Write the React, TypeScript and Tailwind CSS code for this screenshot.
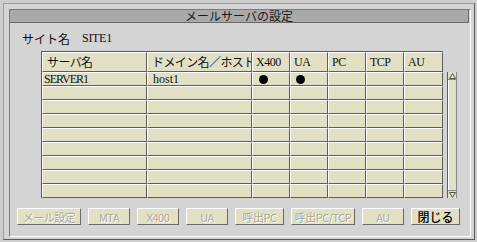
import React from "react";

const cols = [
  { w: "w-[105px]", label: "サーバ名", jp: true, pl: "pl-[4px]" },
  { w: "w-[105px]", label: "ドメイン名／ホスト", jp: true, pl: "pl-[4px]" },
  { w: "w-[38px]", label: "X400", jp: false, pl: "pl-[3px]" },
  { w: "w-[38px]", label: "UA", jp: false, pl: "pl-[3px]" },
  { w: "w-[38px]", label: "PC", jp: false, pl: "pl-[3px]" },
  { w: "w-[38px]", label: "TCP", jp: false, pl: "pl-[3px]" },
  { w: "w-[39px]", label: "AU", jp: false, pl: "pl-[3px]" },
];

const cell =
  "h-full shrink-0 bg-[#e2e0c4] border-t border-l border-t-white border-l-white border-r border-b border-r-[#5e5e5e] border-b-[#5e5e5e] flex items-center overflow-hidden whitespace-nowrap";

const jpFont = "font-['Noto_Sans_CJK_JP',sans-serif]";
const latFont = "font-['Liberation_Serif','Noto_Sans_CJK_JP',serif]";

function Dot() {
  return <div className="w-[9px] h-[9px] rounded-full bg-black" />;
}

const buttons = [
  { label: "メール設定", w: "w-[64px]", on: false },
  { label: "MTA", w: "w-[42px]", on: false },
  { label: "X400", w: "w-[42px]", on: false },
  { label: "UA", w: "w-[42px]", on: false },
  { label: "呼出PC", w: "w-[49px]", on: false },
  { label: "呼出PC/TCP", w: "w-[64px]", on: false },
  { label: "AU", w: "w-[42px]", on: false },
  { label: "閉じる", w: "w-[49px]", on: true },
];

export default function App() {
  const rows = Array.from({ length: 9 }, (_, i) => i);
  return (
    <div className={`w-[477px] h-[242px] bg-[#cdcdcd] p-[3px] ${latFont}`}>
      <div className="w-[472px] h-[237px] bg-[#d4d4d4] border border-t-[#9c9c9c] border-l-[#9c9c9c] border-r-[#5a5a5a] border-b-[#5a5a5a] pl-[5px] pt-[5px]">
        <div className="w-[462px] h-[228px] border-l border-t border-l-[#7a7a7a] border-t-[#7a7a7a] border-r border-b border-r-white border-b-white flex flex-col">
          {/* title bar */}
          <div className="w-[459px] h-[13px] bg-[#a9a9a9] border-r border-b border-r-[#6a6a6a] border-b-[#6a6a6a] flex items-center justify-center">
            <span className={`${jpFont} text-[12px] leading-[12px] text-[#1a1a1a]`}>
              メールサーバの設定
            </span>
          </div>

          {/* site label */}
          <div className="pl-[12px] pt-[8px] h-[23px] flex items-center text-[#111]">
            <span className={`${jpFont} text-[12px] leading-[15px]`}>サイト名</span>
            <span className={`${latFont} text-[12px] leading-[15px] tracking-[-0.3px] ml-[12px]`}>SITE1</span>
          </div>

          {/* table + scrollbar */}
          <div className="flex items-start ml-[31px] mt-[5px]">
            <div className="border-l border-t border-l-[#5a5a5a] border-t-[#5a5a5a]">
              <div className="flex h-[20px]">
                {cols.map((c) => (
                  <div key={c.label} className={`${cell} ${c.w} ${c.pl}`}>
                    <span
                      className={
                        c.jp
                          ? `${jpFont} text-[12px] leading-[14px] tracking-[-0.6px] text-[#111]`
                          : `${latFont} text-[12px] leading-[14px] tracking-[-0.5px] text-[#111]`
                      }
                    >
                      {c.label}
                    </span>
                  </div>
                ))}
              </div>
              {rows.map((r) => (
                <div key={r} className="flex h-[14px]">
                  {cols.map((c, ci) => {
                    let content: React.ReactNode = null;
                    let pl = "pl-[2px]";
                    if (r === 0) {
                      if (ci === 0) {
                        content = (
                          <span className={`${latFont} text-[12px] leading-[12px] tracking-[-1px] text-[#111]`}>
                            SERVER1
                          </span>
                        );
                        pl = "pl-[1px]";
                      } else if (ci === 1) {
                        content = (
                          <span className={`${latFont} text-[12px] leading-[12px] text-[#111]`}>host1</span>
                        );
                        pl = "pl-[5px]";
                      } else if (ci === 2) {
                        content = <Dot />;
                        pl = "pl-[6px]";
                      } else if (ci === 3) {
                        content = <Dot />;
                        pl = "pl-[5px]";
                      }
                    }
                    return (
                      <div key={ci} className={`${cell} ${c.w} ${pl}`}>
                        {content}
                      </div>
                    );
                  })}
                </div>
              ))}
            </div>

            {/* scrollbar */}
            <div className="ml-[4px] mt-[21px] w-[10px] h-[126px] bg-[#e2e0c4] border-l border-r border-l-[#5e5e5e] border-r-[#8a8a8a] flex flex-col">
              <div className="h-[8px] border-b border-b-[#8a8a8a] flex items-center justify-center">
                <svg width="7" height="6" viewBox="0 0 7 6">
                  <polygon points="3.5,0.5 6.5,5.5 0.5,5.5" fill="none" stroke="#555" strokeWidth="1" />
                </svg>
              </div>
              <div className="flex-1 border-l border-l-white" />
              <div className="h-[8px] border-t border-t-[#8a8a8a] flex items-center justify-center">
                <svg width="7" height="6" viewBox="0 0 7 6">
                  <polygon points="0.5,0.5 6.5,0.5 3.5,5.5" fill="none" stroke="#555" strokeWidth="1" />
                </svg>
              </div>
            </div>
          </div>

          {/* buttons */}
          <div className="flex gap-[7px] pl-[7px] mt-[10px]">
            {buttons.map((b) => (
              <div
                key={b.label}
                className={`${b.w} h-[17px] shrink-0 bg-[#e2e0c4] border-t border-l border-t-white border-l-white border-r border-b border-r-[#6a6a6a] border-b-[#6a6a6a] flex items-center justify-center whitespace-nowrap overflow-hidden`}
              >
                <span
                  className={
                    b.on
                      ? `${jpFont} text-[12px] leading-[14px] text-black font-medium`
                      : `${jpFont} text-[11px] leading-[14px] text-[#a9a79a] tracking-[-0.5px] [text-shadow:1px_1px_0_#ffffff]`
                  }
                >
                  {b.label}
                </span>
              </div>
            ))}
          </div>
        </div>
      </div>
    </div>
  );
}
